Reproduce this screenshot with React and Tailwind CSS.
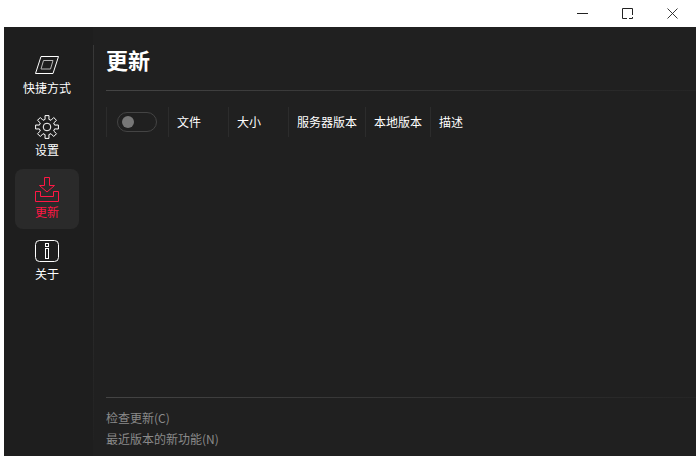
const font = { fontFamily: '"Noto Sans CJK SC", sans-serif' };

function ShortcutIcon() {
  return (
    <svg width="24" height="18" viewBox="0 0 24 18" fill="none">
      <path d="M6 0.5H23.5L18 17.5H0.5Z" stroke="#ffffff" />
      <path d="M8.5 4.5H18L15.5 13H6Z" stroke="#b8b8b8" />
    </svg>
  );
}

// eight teeth, stepping round the centre
function gearPath() {
  const pts = [];
  for (let i = 0; i < 8; i++) {
    const a = (i * Math.PI) / 4 - Math.PI / 2;
    const steps = [
      [7.8, -0.25],
      [11.6, -0.17],
      [11.6, 0.17],
      [7.8, 0.25],
    ];
    steps.forEach(([r, d]) => {
      pts.push(`${(12 + r * Math.cos(a + d)).toFixed(1)} ${(12 + r * Math.sin(a + d)).toFixed(1)}`);
    });
  }
  return "M" + pts.join("L") + "Z";
}

function GearIcon() {
  return (
    <svg width="24" height="24" viewBox="0 0 24 24" fill="none" stroke="currentColor" strokeWidth="1">
      <path d={gearPath()} />
      <circle cx="12" cy="12" r="3.8" />
    </svg>
  );
}

function UpdateIcon() {
  return (
    <svg width="24" height="25" viewBox="0 0 24 25" fill="none" stroke="currentColor" strokeWidth="1">
      <path d="M9.5 0.5H14.5V8.5H19.5L12 15L4.5 8.5H9.5Z" />
      <path d="M0.5 14.5H5.5V19.5H18.5V14.5H23.5V24.5H0.5Z" />
    </svg>
  );
}

function InfoIcon() {
  return (
    <svg width="24" height="22" viewBox="0 0 24 22" fill="none" stroke="currentColor" strokeWidth="1">
      <rect x="0.5" y="0.5" width="23" height="21" rx="4" />
      <rect x="10.5" y="3.5" width="3" height="3" />
      <rect x="10.5" y="8.5" width="3" height="10" />
    </svg>
  );
}

function NavItem({ icon, label, active }) {
  return (
    <div className={`flex h-[60px] w-[64px] flex-col items-center gap-[3px] rounded-lg pt-[7px] ${active ? "bg-[#2a2a2a] text-[#ff1744]" : "text-white"}`}>
      <div className="flex h-[26px] items-center justify-center">{icon}</div>
      <span className="text-xs leading-[14px]">{label}</span>
    </div>
  );
}

function Col({ label, width }) {
  return (
    <div className={`flex h-[30px] items-center border-l border-[#2c2c2c] pl-2 text-xs text-white ${width}`}>
      {label}
    </div>
  );
}

export default function App() {
  return (
    <div className="flex h-[457px] w-[700px] flex-col overflow-hidden bg-white" style={font}>
      <div className="flex h-[27px] items-center justify-end pr-[5px] text-[#222]">
        <div className="flex w-[45px] justify-center">
          <svg width="11" height="11" viewBox="0 0 11 11" fill="none" stroke="currentColor">
            <path d="M0 5.5H11" />
          </svg>
        </div>
        <div className="flex w-[45px] justify-center">
          <svg width="11" height="11" viewBox="0 0 11 11" fill="none" stroke="currentColor">
            <path d="M0.5 0.5H10.5V7M10.5 9V10.5H7M5 10.5H0.5V0.5" />
          </svg>
        </div>
        <div className="flex w-[45px] justify-center">
          <svg width="11" height="11" viewBox="0 0 11 11" fill="none" stroke="currentColor" strokeWidth="0.9">
            <path d="M0.5 0.5L10.5 10.5M10.5 0.5L0.5 10.5" />
          </svg>
        </div>
      </div>
      <div className="mb-px ml-1 mr-1 flex flex-1 bg-[#202020]">
        <div className="flex w-[89px] flex-col gap-[2px] bg-[#1e1e1e] pl-[11px] pt-[18px]">
          <NavItem icon={<ShortcutIcon />} label="快捷方式" />
          <NavItem icon={<GearIcon />} label="设置" />
          <NavItem icon={<UpdateIcon />} label="更新" active />
          <NavItem icon={<InfoIcon />} label="关于" />
        </div>
        <div className="mb-4 mt-[18px] w-px bg-gradient-to-b from-[#383838] to-[#222222]" />
        <div className="flex flex-1 flex-col pl-3">
          <h1 className="mt-[13px] text-[22px] font-bold leading-[38px] text-white">更新</h1>
          <div className="mt-3 h-px bg-gradient-to-r from-[#444] to-[#252525]" />
          <div className="mt-4 flex">
            <div className="flex h-[30px] w-[62px] items-center border-l border-[#2c2c2c] pl-[10px]">
              <div className="flex h-5 w-10 items-center rounded-full border border-[#444] pl-1">
                <div className="h-3 w-3 rounded-full bg-[#777]" />
              </div>
            </div>
            <Col label="文件" width="w-[60px]" />
            <Col label="大小" width="w-[60px]" />
            <Col label="服务器版本" width="w-[77px]" />
            <Col label="本地版本" width="w-[65px]" />
            <Col label="描述" width="w-[60px]" />
          </div>
          <div className="mt-auto h-px bg-gradient-to-r from-[#444] to-[#252525]" />
          <div className="mb-[9px] mt-[11px] flex flex-col gap-1 text-xs leading-[17px] text-[#8a8a8a]">
            <span>检查更新(C)</span>
            <span>最近版本的新功能(N)</span>
          </div>
        </div>
      </div>
    </div>
  );
}
